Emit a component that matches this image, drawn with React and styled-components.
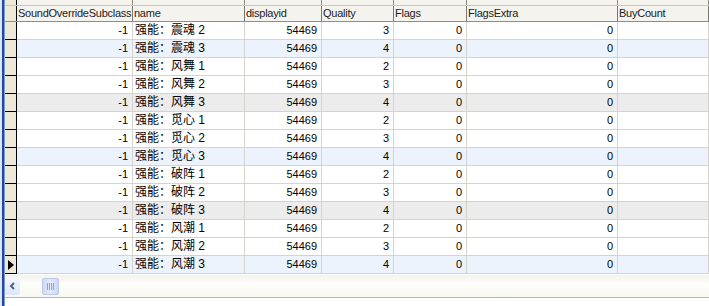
import React from "react";
import styled, { createGlobalStyle } from "styled-components";

const COLS = "12px 116px 112px 77px 72px 73px 151px 1fr";

const columns = [
  "SoundOverrideSubclass",
  "name",
  "displayid",
  "Quality",
  "Flags",
  "FlagsExtra",
  "BuyCount",
];

const rows = [
  { name: "强能：震魂 2", q: 3, tone: "white" },
  { name: "强能：震魂 3", q: 4, tone: "blue" },
  { name: "强能：风舞 1", q: 2, tone: "white" },
  { name: "强能：风舞 2", q: 3, tone: "white" },
  { name: "强能：风舞 3", q: 4, tone: "gray" },
  { name: "强能：觅心 1", q: 2, tone: "white" },
  { name: "强能：觅心 2", q: 3, tone: "white" },
  { name: "强能：觅心 3", q: 4, tone: "blue" },
  { name: "强能：破阵 1", q: 2, tone: "white" },
  { name: "强能：破阵 2", q: 3, tone: "white" },
  { name: "强能：破阵 3", q: 4, tone: "gray" },
  { name: "强能：风潮 1", q: 2, tone: "white" },
  { name: "强能：风潮 2", q: 3, tone: "white" },
  { name: "强能：风潮 3", q: 4, tone: "blue", current: true },
];

const TONES = { white: "#ffffff", blue: "#edf3fc", gray: "#ececec" };

const Global = createGlobalStyle`
  html, body { margin: 0; padding: 0; background: #ffffff; }
  body {
    width: 709px;
    height: 306px;
    overflow: hidden;
    font-family: Tahoma, "Liberation Sans", "Noto Sans CJK SC", sans-serif;
    font-size: 11px;
    color: #000;
  }
`;

const Window = styled.div`
  display: flex;
  height: 306px;
`;

const EdgeBar = styled.div`
  width: 5px;
  flex: none;
  background: linear-gradient(to right, #dfe4ee 0, #dfe4ee 2px, #1f47a5 2px, #1f47a5 4px, #7f9bd3 4px);
`;

const Main = styled.div`
  flex: 1;
  display: flex;
  flex-direction: column;
  min-width: 0;
`;

const TopSliver = styled.div`
  height: 6px;
  display: grid;
  grid-template-columns: ${COLS};
  background: #f4f3ee;
  border-bottom: 1px solid #c9c7ba;
  box-sizing: border-box;
  & > div {
    border-right: 1px solid #8e8d86;
  }
  & > div:first-child {
    background: #ece9d8;
    border-right: 1px solid #000;
  }
`;

const HeaderRow = styled.div`
  height: 16px;
  display: grid;
  grid-template-columns: ${COLS};
  background: #f4f3ee;
  border-bottom: 1px solid #8e8d86;
  box-sizing: border-box;
`;

const HeaderCell = styled.div`
  padding-left: 1px;
  line-height: 15px;
  white-space: nowrap;
  overflow: hidden;
  color: #222;
  letter-spacing: -0.25px;
  border-right: 1px solid #7a7970;
`;

const Corner = styled.div`
  background: #ece9d8;
  border-right: 1px solid #000;
`;

const Body = styled.div`
  display: flex;
  flex-direction: column;
`;

const Row = styled.div`
  height: 18px;
  display: grid;
  grid-template-columns: ${COLS};
  box-sizing: border-box;
  background: ${(p) => TONES[p.$tone]};
`;

const RowHead = styled.div`
  background: #ece9d8;
  border-right: 1px solid #000;
  border-bottom: 1px solid #000;
  display: flex;
  align-items: center;
  justify-content: center;
`;

const Cell = styled.div`
  border-right: 1px solid #d4d3cc;
  border-bottom: 1px solid #d4d3cc;
  line-height: 17px;
  white-space: nowrap;
  overflow: hidden;
  text-align: ${(p) => (p.$num ? "right" : "left")};
  padding: ${(p) => (p.$num ? "0 4px 0 0" : "0 0 0 2px")};
  font-size: ${(p) => (p.$cjk ? "12px" : "11px")};
`;

const Pointer = styled.div`
  width: 0;
  height: 0;
  border-top: 5px solid transparent;
  border-bottom: 5px solid transparent;
  border-left: 6px solid #000;
`;

const ScrollBar = styled.div`
  height: 23px;
  margin-top: 1px;
  display: flex;
  align-items: center;
  gap: 22px;
  background: linear-gradient(#f3f2ec, #fdfdfa 40%, #f9f8f2);
  border-bottom: 1px solid #b9b8ad;
  box-sizing: border-box;
`;

const ArrowButton = styled.div`
  width: 15px;
  height: 17px;
  display: flex;
  align-items: center;
  justify-content: center;
  background: linear-gradient(#f4f6fd, #dde6fb);
  border-radius: 2px;
`;

const Thumb = styled.div`
  width: 17px;
  height: 17px;
  display: flex;
  align-items: center;
  justify-content: center;
  gap: 1px;
  background: linear-gradient(to right, #cfdaf5, #e3eafb 50%, #cad6f3);
  border-radius: 2px;
  border: 1px solid #b8c8ee;
  box-sizing: border-box;
  & > i {
    width: 1px;
    height: 7px;
    background: #8ea4d8;
  }
`;

export default function App() {
  return (
    <Window>
      <Global />
      <EdgeBar />
      <Main>
        <TopSliver>
          {Array.from({ length: 8 }).map((_, i) => (
            <div key={i} />
          ))}
        </TopSliver>
        <HeaderRow>
          <Corner />
          {columns.map((c) => (
            <HeaderCell key={c}>{c}</HeaderCell>
          ))}
        </HeaderRow>
        <Body>
          {rows.map((r, i) => (
            <Row key={i} $tone={r.tone}>
              <RowHead>{r.current && <Pointer />}</RowHead>
              <Cell $num>-1</Cell>
              <Cell $cjk>{r.name}</Cell>
              <Cell $num>54469</Cell>
              <Cell $num>{r.q}</Cell>
              <Cell $num>0</Cell>
              <Cell $num>0</Cell>
              <Cell />
            </Row>
          ))}
        </Body>
        <ScrollBar>
          <ArrowButton>
            <svg width="7" height="8" viewBox="0 0 7 8">
              <path d="M5 1 L2 4 L5 7" stroke="#4d6185" strokeWidth="2" fill="none" />
            </svg>
          </ArrowButton>
          <Thumb>
            <i />
            <i />
            <i />
            <i />
          </Thumb>
        </ScrollBar>
      </Main>
    </Window>
  );
}
